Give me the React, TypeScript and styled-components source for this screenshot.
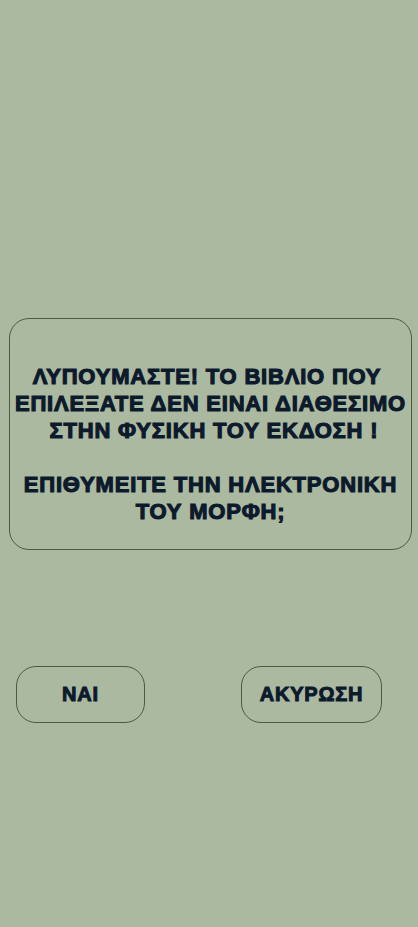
import React from "react";
import styled, { createGlobalStyle } from "styled-components";

const Global = createGlobalStyle`
  html, body { margin: 0; padding: 0; background: #abb9a1; }
  body { font-family: "Liberation Sans", Arial, sans-serif; }
`;

const Page = styled.div`
  width: 418px;
  height: 927px;
  box-sizing: border-box;
  padding: 318px 6px 0 9px;
  display: flex;
  flex-direction: column;
  background: #abb9a1;
`;

const Dialog = styled.div`
  height: 232px;
  box-sizing: border-box;
  border: 1px solid #4b5a40;
  border-radius: 20px;
  display: flex;
  flex-direction: column;
  justify-content: center;
  align-items: center;
  padding-top: 20px;
`;

const Message = styled.p`
  margin: 0;
  text-align: center;
  white-space: pre;
  font-size: 22px;
  line-height: 27px;
  letter-spacing: 0.8px;
  font-weight: bold;
  color: #0c1a2c;
  -webkit-text-stroke: 1.1px #0c1a2c;
`;

const Actions = styled.div`
  display: flex;
  justify-content: space-between;
  padding: 0 30px 0 7px;
  margin-top: 116px;
`;

const Button = styled.button<{ $w: number }>`
  width: ${(p) => p.$w}px;
  height: 57px;
  box-sizing: border-box;
  background: transparent;
  border: 1px solid #4b5a40;
  border-radius: 20px;
  font-family: "Liberation Sans", Arial, sans-serif;
  font-size: 20px;
  letter-spacing: 0.8px;
  font-weight: bold;
  color: #0c1a2c;
  -webkit-text-stroke: 1px #0c1a2c;
  padding: 0;
`;

export default function App() {
  return (
    <>
      <Global />
      <Page>
        <Dialog>
          <Message>
            {"ΛΥΠΟΥΜΑΣΤΕ! ΤΟ ΒΙΒΛΙΟ ΠΟΥ \nΕΠΙΛΕΞΑΤΕ ΔΕΝ ΕΙΝΑΙ ΔΙΑΘΕΣΙΜΟ\n ΣΤΗΝ ΦΥΣΙΚΗ ΤΟΥ ΕΚΔΟΣΗ !\n\nΕΠΙΘΥΜΕΙΤΕ ΤΗΝ ΗΛΕΚΤΡΟΝΙΚΗ\nΤΟΥ ΜΟΡΦΗ;"}
          </Message>
        </Dialog>
        <Actions>
          <Button $w={129}>ΝΑΙ</Button>
          <Button $w={141}>ΑΚΥΡΩΣΗ</Button>
        </Actions>
      </Page>
    </>
  );
}
